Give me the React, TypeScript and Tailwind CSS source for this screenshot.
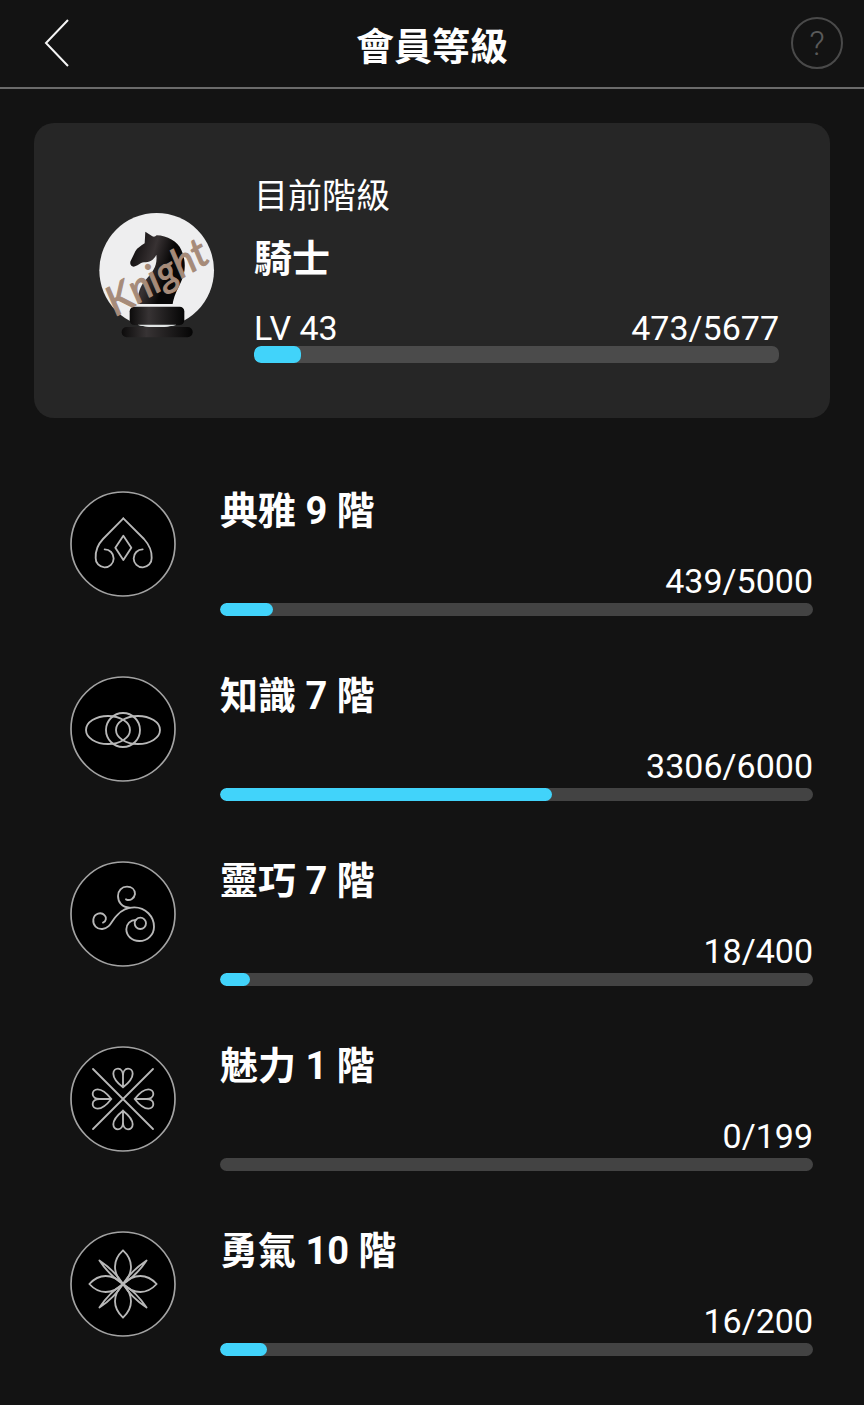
import type { ReactNode } from 'react';

type Trait = {
  name: string;
  tier: number;
  value: number;
  max: number;
  icon: ReactNode;
};

const quarterTurns = [0, 90, 180, 270];

const EleganceIcon = () => (
  <>
    <path d="M1-77L-60-15C-78 4-83 22-82 42A27 27 0 1 0-55 16" />
    <path d="M1-77L63-15C80 4 87 22 86 42A27 27 0 1 1 59 16" />
    <path d="M1-25L25 11L1 48L-23 11Z" />
  </>
);

const KnowledgeIcon = () => (
  <>
    <ellipse cx="-45" cy="3" rx="66" ry="42" />
    <ellipse cx="45" cy="3" rx="66" ry="42" />
    <circle cx="0" cy="3" r="51" />
  </>
);

const DexterityIcon = () => (
  <>
    <path d="M-60 26C-50 22-49 10-55 4C-65-7-86-3-89 16C-91 34-78 46-62 45C-36 42-34 18-18 4C-4-12 14-20 34-20C68-20 93 8 93 38C93 62 74 81 49 81C26 81 10 65 10 46C10 30 22 18 38 18" />
    <path d="M9-44C20-38 34-46 36-60C36-74 26-82 12-82C-4-82-15-70-15-54C-15-36-4-20 20-19" />
    <circle cx="52" cy="28" r="17" />
  </>
);

const CharmIcon = () => (
  <>
    <path d="M-90-90L90 90M90-90L-90 90" />
    {quarterTurns.map((angle) => (
      <path
        key={angle}
        transform={`rotate(${angle})`}
        d="M0-35C-14-46-29-60-29-76C-29-86-22-91-15-91C-6-91 0-82 0-70V-35M0-35C14-46 29-60 29-76C29-86 22-91 15-91C6-91 0-82 0-70"
      />
    ))}
  </>
);

const CourageIcon = () => (
  <>
    {quarterTurns.map((angle) => (
      <g key={angle} transform={`rotate(${angle})`}>
        <path d="M0 0C-18-18-24-36-24-52C-24-72-12-90 0-101C12-90 24-72 24-52C24-36 18-18 0 0" />
        <path transform="rotate(45)" d="M0 0C-7-30-7-65 0-100C7-65 7-30 0 0" />
      </g>
    ))}
  </>
);

const traits: Trait[] = [
  { name: '典雅', tier: 9, value: 439, max: 5000, icon: <EleganceIcon /> },
  { name: '知識', tier: 7, value: 3306, max: 6000, icon: <KnowledgeIcon /> },
  { name: '靈巧', tier: 7, value: 18, max: 400, icon: <DexterityIcon /> },
  { name: '魅力', tier: 1, value: 0, max: 199, icon: <CharmIcon /> },
  { name: '勇氣', tier: 10, value: 16, max: 200, icon: <CourageIcon /> },
];

const KnightBadge = () => (
  <svg viewBox="42 39 345 345" className="size-[115px] shrink-0 overflow-visible">
    <defs>
      <linearGradient id="horse" x1="0" y1="0.2" x2="1" y2="0.6">
        <stop offset="0" stopColor="#0c0a0b" />
        <stop offset="0.4" stopColor="#383233" />
        <stop offset="0.7" stopColor="#080707" />
      </linearGradient>
      <linearGradient id="base">
        <stop offset="0" stopColor="#0c0b0b" />
        <stop offset="0.35" stopColor="#373334" />
        <stop offset="1" stopColor="#050505" />
      </linearGradient>
    </defs>
    <circle cx="215" cy="211" r="172" fill="#eeeeef" />
    <path
      fill="url(#horse)"
      d="M181 95L202 109C207 111 211 110 215 106C246 107 278 124 289 150C304 184 302 216 288 246C275 273 266 291 263 312H159C157 286 163 262 181 241C204 216 218 198 214 164C206 181 192 187 177 187C164 188 158 199 146 200C136 199 133 189 138 181L151 154C157 143 168 138 179 130Z"
    />
    <rect x="134" y="320" width="164" height="55" rx="14" fill="url(#base)" />
    <rect x="110" y="381" width="213" height="31" rx="15" fill="url(#base)" />
    <path d="M158 374H274C260 382 172 382 158 374Z" fill="#dfe3e3" />
    <text
      transform="translate(92 350) rotate(-30)"
      fill="#a68b79"
      stroke="#a68b79"
      strokeWidth="3"
      strokeLinejoin="round"
      className="font-['Lato'] text-[122px] italic"
    >
      Knight
    </text>
  </svg>
);

type ProgressProps = {
  label: string;
  value: number;
  max: number;
  className: string;
};

const Progress = ({ label, value, max, className }: ProgressProps) => (
  <div
    role="progressbar"
    aria-label={label}
    aria-valuenow={value}
    aria-valuemax={max}
    className={`overflow-hidden ${className}`}
  >
    <div
      className="h-full rounded-[7px] bg-[#41d3fa]"
      style={{ width: `${Math.ceil((value / max) * 100)}%` }}
    />
  </div>
);

const TraitRow = ({ name, tier, value, max, icon }: Trait) => (
  <li className="flex gap-[44px]">
    <svg
      viewBox="-159 -159 318 318"
      fill="none"
      stroke="#b8b8b8"
      strokeWidth="5.5"
      strokeLinecap="round"
      strokeLinejoin="round"
      className="size-[106px] shrink-0"
    >
      <circle r="156" fill="#000" stroke="#a3a3a3" strokeWidth="5" />
      {icon}
    </svg>
    <div className="flex-1">
      <h2 className="text-[38px] leading-[40px] font-bold">
        {name} {tier} 階
      </h2>
      <p className="mt-[30px] mb-[2px] text-right text-[34px] leading-[40px]">
        {value}/{max}
      </p>
      <Progress label={name} value={value} max={max} className="h-[13px] rounded-[7px] bg-[#434343]" />
    </div>
  </li>
);

const App = () => {
  return (
    <div className="min-h-screen bg-[#131313] font-['Roboto','Noto_Sans_CJK_TC',sans-serif] text-white">
      <header className="flex items-end justify-between border-b-2 border-[#6b6b6b] px-[21px] pt-[17px] pb-[18px]">
        <button type="button" aria-label="返回" className="size-[52px]">
          <svg viewBox="0 0 52 52" fill="none" stroke="#f5f5f5" strokeWidth="2" className="size-full">
            <path d="M47 3L25 26L47 49" />
          </svg>
        </button>
        <h1 className="text-[38px] leading-[44px] font-bold">會員等級</h1>
        <button
          type="button"
          aria-label="說明"
          className="size-[52px] rounded-full border-2 border-[#4a4a4a] text-[34px] leading-[48px] font-light text-[#5a5a5a]"
        >
          ?
        </button>
      </header>

      <main className="px-[34px] py-[34px]">
        <section className="flex items-center gap-[40px] rounded-[20px] bg-[#262626] py-[55px] pr-[51px] pl-[65px]">
          <KnightBadge />
          <div className="flex-1">
            <p className="text-[34px] leading-[36px]">目前階級</p>
            <h2 className="mt-[25px] text-[38px] leading-[40px] font-bold">騎士</h2>
            <div className="mt-[31px] flex justify-between text-[34px] leading-[36px]">
              <span>LV 43</span>
              <span>473/5677</span>
            </div>
            <Progress label="騎士" value={473} max={5677} className="h-[17px] rounded-[7px] bg-[#4b4b4b]" />
          </div>
        </section>

        <ul className="mt-[73px] flex flex-col gap-[60px] pr-[17px] pl-[36px]">
          {traits.map((trait) => (
            <TraitRow key={trait.name} {...trait} />
          ))}
        </ul>
      </main>
    </div>
  );
};

export default App;
